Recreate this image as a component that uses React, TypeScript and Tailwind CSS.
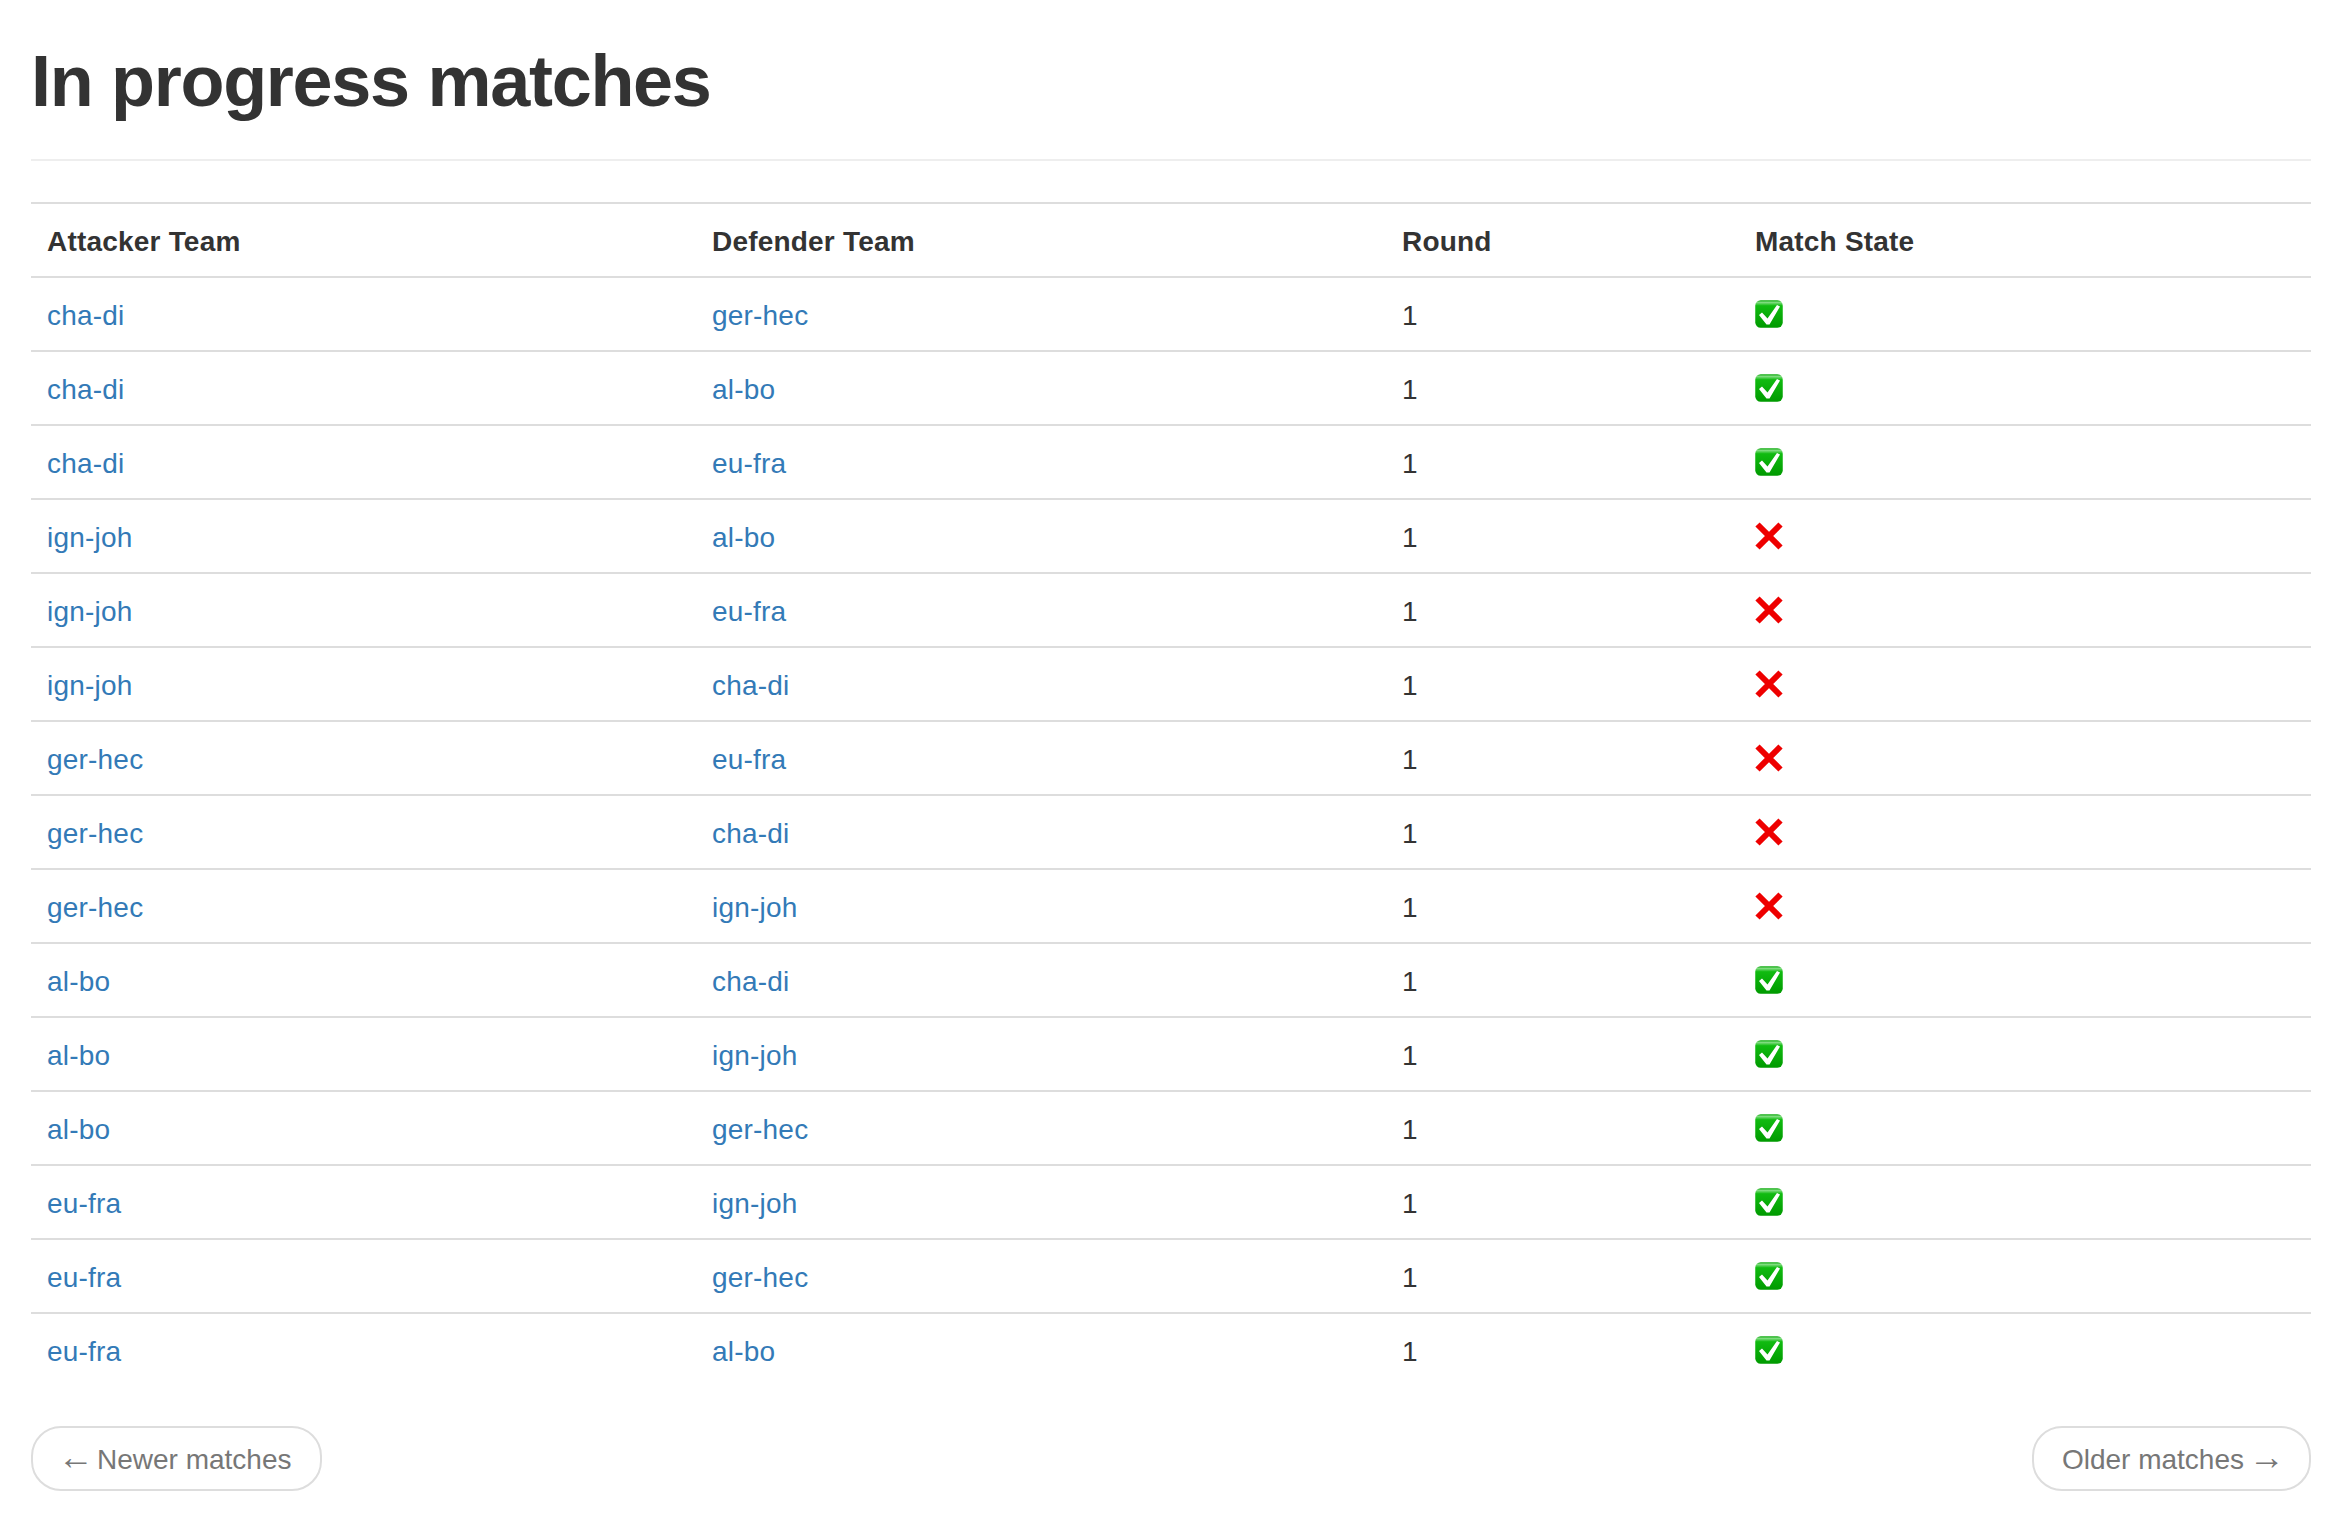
const rows: [string, string, boolean][] = [
  ['cha-di', 'ger-hec', true],
  ['cha-di', 'al-bo', true],
  ['cha-di', 'eu-fra', true],
  ['ign-joh', 'al-bo', false],
  ['ign-joh', 'eu-fra', false],
  ['ign-joh', 'cha-di', false],
  ['ger-hec', 'eu-fra', false],
  ['ger-hec', 'cha-di', false],
  ['ger-hec', 'ign-joh', false],
  ['al-bo', 'cha-di', true],
  ['al-bo', 'ign-joh', true],
  ['al-bo', 'ger-hec', true],
  ['eu-fra', 'ign-joh', true],
  ['eu-fra', 'ger-hec', true],
  ['eu-fra', 'al-bo', true],
];

function CheckMark() {
  return (
    <svg width="28" height="28" viewBox="0 0 28 28" className="block">
      <defs>
        <linearGradient id="checkBg" x1="0" y1="0" x2="0" y2="1">
          <stop offset="0" stopColor="#0aa80a" />
          <stop offset="0.08" stopColor="#7fdc7f" />
          <stop offset="0.2" stopColor="#10bb10" />
          <stop offset="1" stopColor="#009a00" />
        </linearGradient>
      </defs>
      <rect x="0.25" y="0.25" width="27.5" height="27.5" rx="5.5" fill="url(#checkBg)" />
      <path d="M4 15L7 12.5L12.5 18.5L22 5L25 6.5L14.5 24.5L11.5 24.5Z" fill="#fff" />
    </svg>
  );
}

function CrossMark() {
  return (
    <svg width="28" height="28" viewBox="0 0 28 28" className="block">
      <path d="M2.5 2.5L25.5 25.5M25.5 2.5L2.5 25.5" fill="none" stroke="#ee0000" strokeWidth="6" />
    </svg>
  );
}

export default function App() {
  return (
    <div className="min-h-screen bg-white pr-[29px] pl-[31px] font-['Liberation_Sans',Arial,sans-serif] text-[28px] leading-[40px] text-[#333]">
      <div className="mt-[42px] mb-[41px] border-b-2 border-[#eee] pb-[18px]">
        <h1 className="mb-5 text-[72px] leading-[79px] font-bold tracking-[-1.3px]">In progress matches</h1>
      </div>

      <table className="mb-10 w-full table-fixed border-collapse tracking-[0.2px]">
        <colgroup>
          <col className="w-[665px]" />
          <col className="w-[690px]" />
          <col className="w-[353px]" />
          <col />
        </colgroup>
        <thead>
          <tr className="border-y-2 border-[#ddd]">
            <th className="px-4 pt-[18px] pb-[14px] text-left font-bold">Attacker Team</th>
            <th className="px-4 pt-[18px] pb-[14px] text-left font-bold">Defender Team</th>
            <th className="px-4 pt-[18px] pb-[14px] text-left font-bold">Round</th>
            <th className="px-4 pt-[18px] pb-[14px] text-left font-bold">Match State</th>
          </tr>
        </thead>
        <tbody>
          {rows.map(([attacker, defender, ok], i) => (
            <tr key={i} className={i > 0 ? 'border-t-2 border-[#ddd]' : ''}>
              <td className="px-4 pt-[18px] pb-[14px]">
                <a className="text-[#337ab7]">{attacker}</a>
              </td>
              <td className="px-4 pt-[18px] pb-[14px]">
                <a className="text-[#337ab7]">{defender}</a>
              </td>
              <td className="px-4 pt-[18px] pb-[14px]">1</td>
              <td className="p-4">{ok ? <CheckMark /> : <CrossMark />}</td>
            </tr>
          ))}
        </tbody>
      </table>

      <div className="flex justify-between text-[#777]">
        <a className="rounded-[30px] border-2 border-[#ddd] px-7 pt-[11px] pb-[9px]">
          <span className="-ml-[3px] inline-block w-[39px] text-[36px] leading-none">←</span>Newer matches
        </a>
        <a className="rounded-[30px] border-2 border-[#ddd] px-7 pt-[11px] pb-[9px]">
          Older matches<span className="inline-block w-[37px] pl-[5px] text-[36px] leading-none">→</span>
        </a>
      </div>
    </div>
  );
}
